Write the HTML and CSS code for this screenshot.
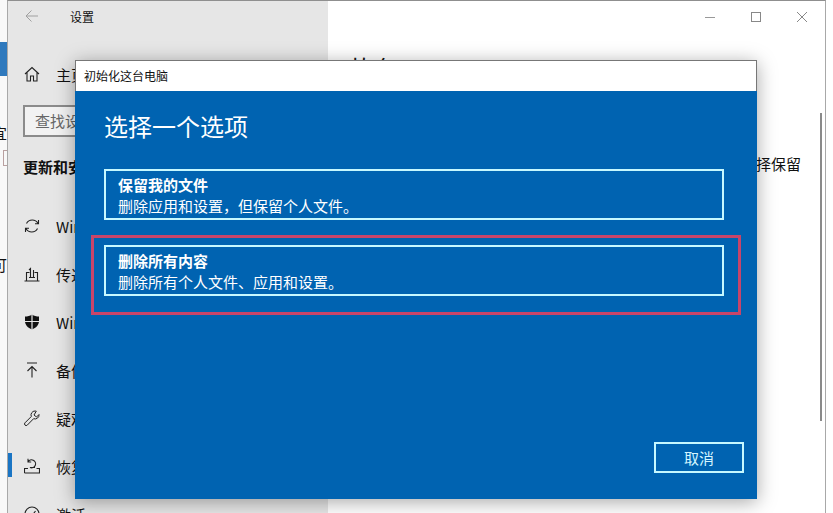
FILE: index.html
```html
<!DOCTYPE html>
<html lang="zh-CN">
<head>
    <meta charset="UTF-8">
    <title>初始化这台电脑</title>
    <link rel="stylesheet" href="styles.css">
</head>
<body>
    <div class="desktop">
        <div class="behind">
            <div class="behind-tab"></div>
            <div class="behind-char char-a">宜</div>
            <div class="behind-doc"></div>
            <div class="behind-char char-b">可</div>
        </div>

        <div class="settings">
            <aside class="sidebar">
                <div class="titlebar">
                    <svg class="back-icon" width="14" height="14" viewBox="0 0 14 14"><path d="M13 7H1M6.500 1.500L1 7l5.500 5.500" fill="none" stroke="#a0a0a0" stroke-width="1"/></svg>
                    <span class="app-name">设置</span>
                </div>

                <div class="nav-row home-row">
                    <svg class="nav-icon" width="16" height="16" viewBox="0 0 16 16"><path d="M1 8L8 1.500 15 8M3 6.500V15h3.500V10h3v5H13V6.500" fill="none" stroke="#222" stroke-width="1.100"/></svg>
                    <span>主页</span>
                </div>

                <div class="search-box">查找设置</div>
                <h2 class="section-title">更新和安全</h2>

                <nav class="nav-list">
                    <div class="nav-row">
                        <svg class="nav-icon" width="16" height="16" viewBox="0 0 16 16"><path d="M2.500 5.500A6.500 6.500 0 0 1 14 5.500M13.500 10.500A6.500 6.500 0 0 1 2 10.500M14.500 2v3.800h-3.500M1.500 14v-3.800H5" fill="none" stroke="#222" stroke-width="1.100"/></svg>
                        <span>Windows 更新</span>
                    </div>
                    <div class="nav-row">
                        <svg class="nav-icon" width="16" height="16" viewBox="0 0 16 16"><path d="M0.500 15h15M2.500 15V6.500h3M13.500 15V6.500h-3M6.500 11.500V2.500L5 4M9.500 11.500V4M5 11.500h6" fill="none" stroke="#222" stroke-width="1.100"/></svg>
                        <span>传递优化</span>
                    </div>
                    <div class="nav-row">
                        <svg class="nav-icon" width="16" height="16" viewBox="0 0 16 16"><path d="M8 0.500C6 2 3.500 2.500 1 2.500V7c0 4 3 7 7 8.500 4-1.500 7-4.500 7-8.500V2.500C12.500 2.500 10 2 8 0.500z" fill="#111"/><path d="M8 0v16M0 7.500h16" stroke="#e6e6e6" stroke-width="1.200"/></svg>
                        <span>Windows 安全中心</span>
                    </div>
                    <div class="nav-row">
                        <svg class="nav-icon" width="16" height="16" viewBox="0 0 16 16"><path d="M3 1h10M8 15.500V4.500M3.500 9L8 4.500 12.500 9" fill="none" stroke="#222" stroke-width="1.100"/></svg>
                        <span>备份</span>
                    </div>
                    <div class="nav-row">
                        <svg class="nav-icon" width="16" height="16" viewBox="0 0 16 16"><path d="M11 1a4 4 0 0 0-3.700 5.500L1 12.800a1.600 1.600 0 0 0 2.300 2.300l6.300-6.400A4 4 0 0 0 15 4.500L12.500 7 10 5l2.300-3.800A4 4 0 0 0 11 1z" fill="none" stroke="#222" stroke-width="1"/></svg>
                        <span>疑难解答</span>
                    </div>
                    <div class="nav-row active">
                        <svg class="nav-icon" width="16" height="16" viewBox="0 0 16 16"><path d="M0.500 15h15v-4.500h-3M0.500 15v-4.500h3.500M4 4a4 4 0 1 1 2 5.500h5M4 0.800V4h3.200" fill="none" stroke="#222" stroke-width="1.100"/></svg>
                        <span>恢复</span>
                    </div>
                    <div class="nav-row">
                        <svg class="nav-icon" width="16" height="16" viewBox="0 0 16 16"><circle cx="8" cy="8" r="7" fill="none" stroke="#222" stroke-width="1.100"/><path d="M4.500 8.500L7 11l4.500-6" fill="none" stroke="#222" stroke-width="1.100"/></svg>
                        <span>激活</span>
                    </div>
                </nav>
            </aside>

            <main class="content">
                <div class="window-controls">
                    <svg width="12" height="12" viewBox="0 0 12 12"><path d="M1 6.500h10" stroke="#999" stroke-width="1"/></svg>
                    <svg width="12" height="12" viewBox="0 0 12 12"><rect x="1.500" y="1.500" width="9" height="9" fill="none" stroke="#888" stroke-width="1"/></svg>
                    <svg width="12" height="12" viewBox="0 0 12 12"><path d="M1 1l10 10M11 1L1 11" stroke="#888" stroke-width="1"/></svg>
                </div>
                <h1 class="content-title">恢复</h1>
                <p class="content-text">查看你的选项，然后选择保留</p>
                <div class="scrollbar"></div>
            </main>
        </div>
    </div>

    <section class="dialog">
        <header class="dialog-title">初始化这台电脑</header>
        <div class="dialog-body">
            <h2 class="dialog-heading">选择一个选项</h2>
            <div class="option">
                <strong>保留我的文件</strong>
                <span>删除应用和设置，但保留个人文件。</span>
            </div>
            <div class="option option-marked">
                <strong>删除所有内容</strong>
                <span>删除所有个人文件、应用和设置。</span>
            </div>
            <button class="cancel">取消</button>
        </div>
    </section>
</body>
</html>
```

FILE: styles.css
```css
html, body {
    margin: 0;
    height: 100%;
    overflow: hidden;
    background-color: #fff;
    font-family: "Noto Sans CJK SC", "Liberation Sans", sans-serif;
    color: #111;
}
.desktop {
    display: flex;
    height: 513px;
}

/* sliver of the window behind */
.behind {
    position: relative;
    width: 7px;
    flex: none;
    overflow: hidden;
    background-color: #f8f8f8;
}
.behind-tab {
    margin-top: 42px;
    height: 34px;
    background-color: #2f79bd;
}
.behind-char {
    position: absolute;
    left: -8px;
    font-size: 15px;
    line-height: 16px;
}
.char-a {
    top: 125px;
}
.char-b {
    top: 257px;
}
.behind-doc {
    position: absolute;
    top: 150px;
    left: 3px;
    width: 8px;
    height: 14px;
    border: 1px solid #b9a0a0;
}

/* settings window */
.settings {
    display: flex;
    width: 819px;
    flex: none;
    border-top: 1px solid #8f8f8f;
    border-left: 1px solid #a8a8a8;
    border-right: 1px solid #a8a8a8;
    box-sizing: border-box;
}
.sidebar {
    width: 320px;
    flex: none;
    background-color: #e6e6e6;
    overflow: hidden;
}
.titlebar {
    display: flex;
    align-items: center;
    height: 30px;
    padding-left: 17px;
}
.app-name {
    margin-left: 31px;
    font-size: 12px;
}
.back-icon {
    flex: none;
}
.nav-row {
    position: relative;
    display: flex;
    align-items: center;
    height: 48px;
    padding-left: 16px;
    font-size: 15px;
    white-space: nowrap;
}
.nav-row span {
    margin-left: 16px;
}
.nav-icon {
    flex: none;
}
.home-row {
    margin-top: 19px;
}
.nav-row.active::before {
    content: "";
    position: absolute;
    left: 0;
    top: 11px;
    width: 4px;
    height: 24px;
    background-color: #1a75c4;
}
.search-box {
    width: 300px;
    height: 28px;
    margin: 7px 0 0 15px;
    padding-left: 10px;
    border: 2px solid #8b8b8b;
    background-color: #f2f2f2;
    color: #666;
    font-size: 15px;
    line-height: 28px;
}
.section-title {
    margin: 20px 0 25px 15px;
    font-size: 15px;
    line-height: 20px;
    font-weight: 700;
}
.nav-list {
    display: flex;
    flex-direction: column;
}
.content {
    position: relative;
    flex: 1;
    background-color: #fff;
    overflow: hidden;
}
.window-controls {
    display: flex;
    justify-content: flex-end;
    gap: 34px;
    padding: 10px 17px 0 0;
}
.content-title {
    margin: 28px 0 0 22px;
    font-size: 26px;
    line-height: 36px;
    font-weight: 400;
}
.content-text {
    margin: 67px 24px 0 0;
    font-size: 15px;
    line-height: 20px;
    text-align: right;
}
.scrollbar {
    position: absolute;
    top: 112px;
    right: 3px;
    width: 2px;
    height: 308px;
    background-color: #8a8a8a;
}

/* reset dialog, over the settings window */
.dialog {
    position: absolute;
    top: 60px;
    left: 75px;
    width: 682px;
    height: 439px;
    display: flex;
    flex-direction: column;
    box-shadow: 0 3px 18px rgba(0, 0, 0, 0.35);
}
.dialog-title {
    height: 30px;
    padding-left: 8px;
    border: 1px solid #777;
    border-bottom: none;
    background-color: #fff;
    font-size: 12px;
    line-height: 30px;
}
.dialog-body {
    position: relative;
    flex: 1;
    display: flex;
    flex-direction: column;
    align-items: flex-start;
    padding: 0 33px 26px 29px;
    background-color: #0063b1;
    color: #fff;
}
.dialog-heading {
    margin: 17px 0 25px;
    font-size: 24px;
    line-height: 36px;
    font-weight: 400;
}
.option {
    position: relative;
    box-sizing: border-box;
    display: flex;
    flex-direction: column;
    width: 620px;
    height: 51px;
    padding: 3px 0 0 12px;
    border: 2px solid #c6f8ff;
    font-size: 15px;
    line-height: 21px;
}
.option + .option {
    margin-top: 25px;
}
.option-marked::after {
    content: "";
    position: absolute;
    top: -12px;
    left: -15px;
    width: 644px;
    height: 74px;
    border: 3px solid #c8456a;
}
.cancel {
    box-sizing: border-box;
    align-self: flex-end;
    width: 90px;
    height: 31px;
    margin-top: auto;
    margin-right: -20px;
    padding: 0;
    border: 2px solid #c6f8ff;
    background: none;
    color: #d4f6ff;
    font-family: inherit;
    font-size: 15px;
}
```
